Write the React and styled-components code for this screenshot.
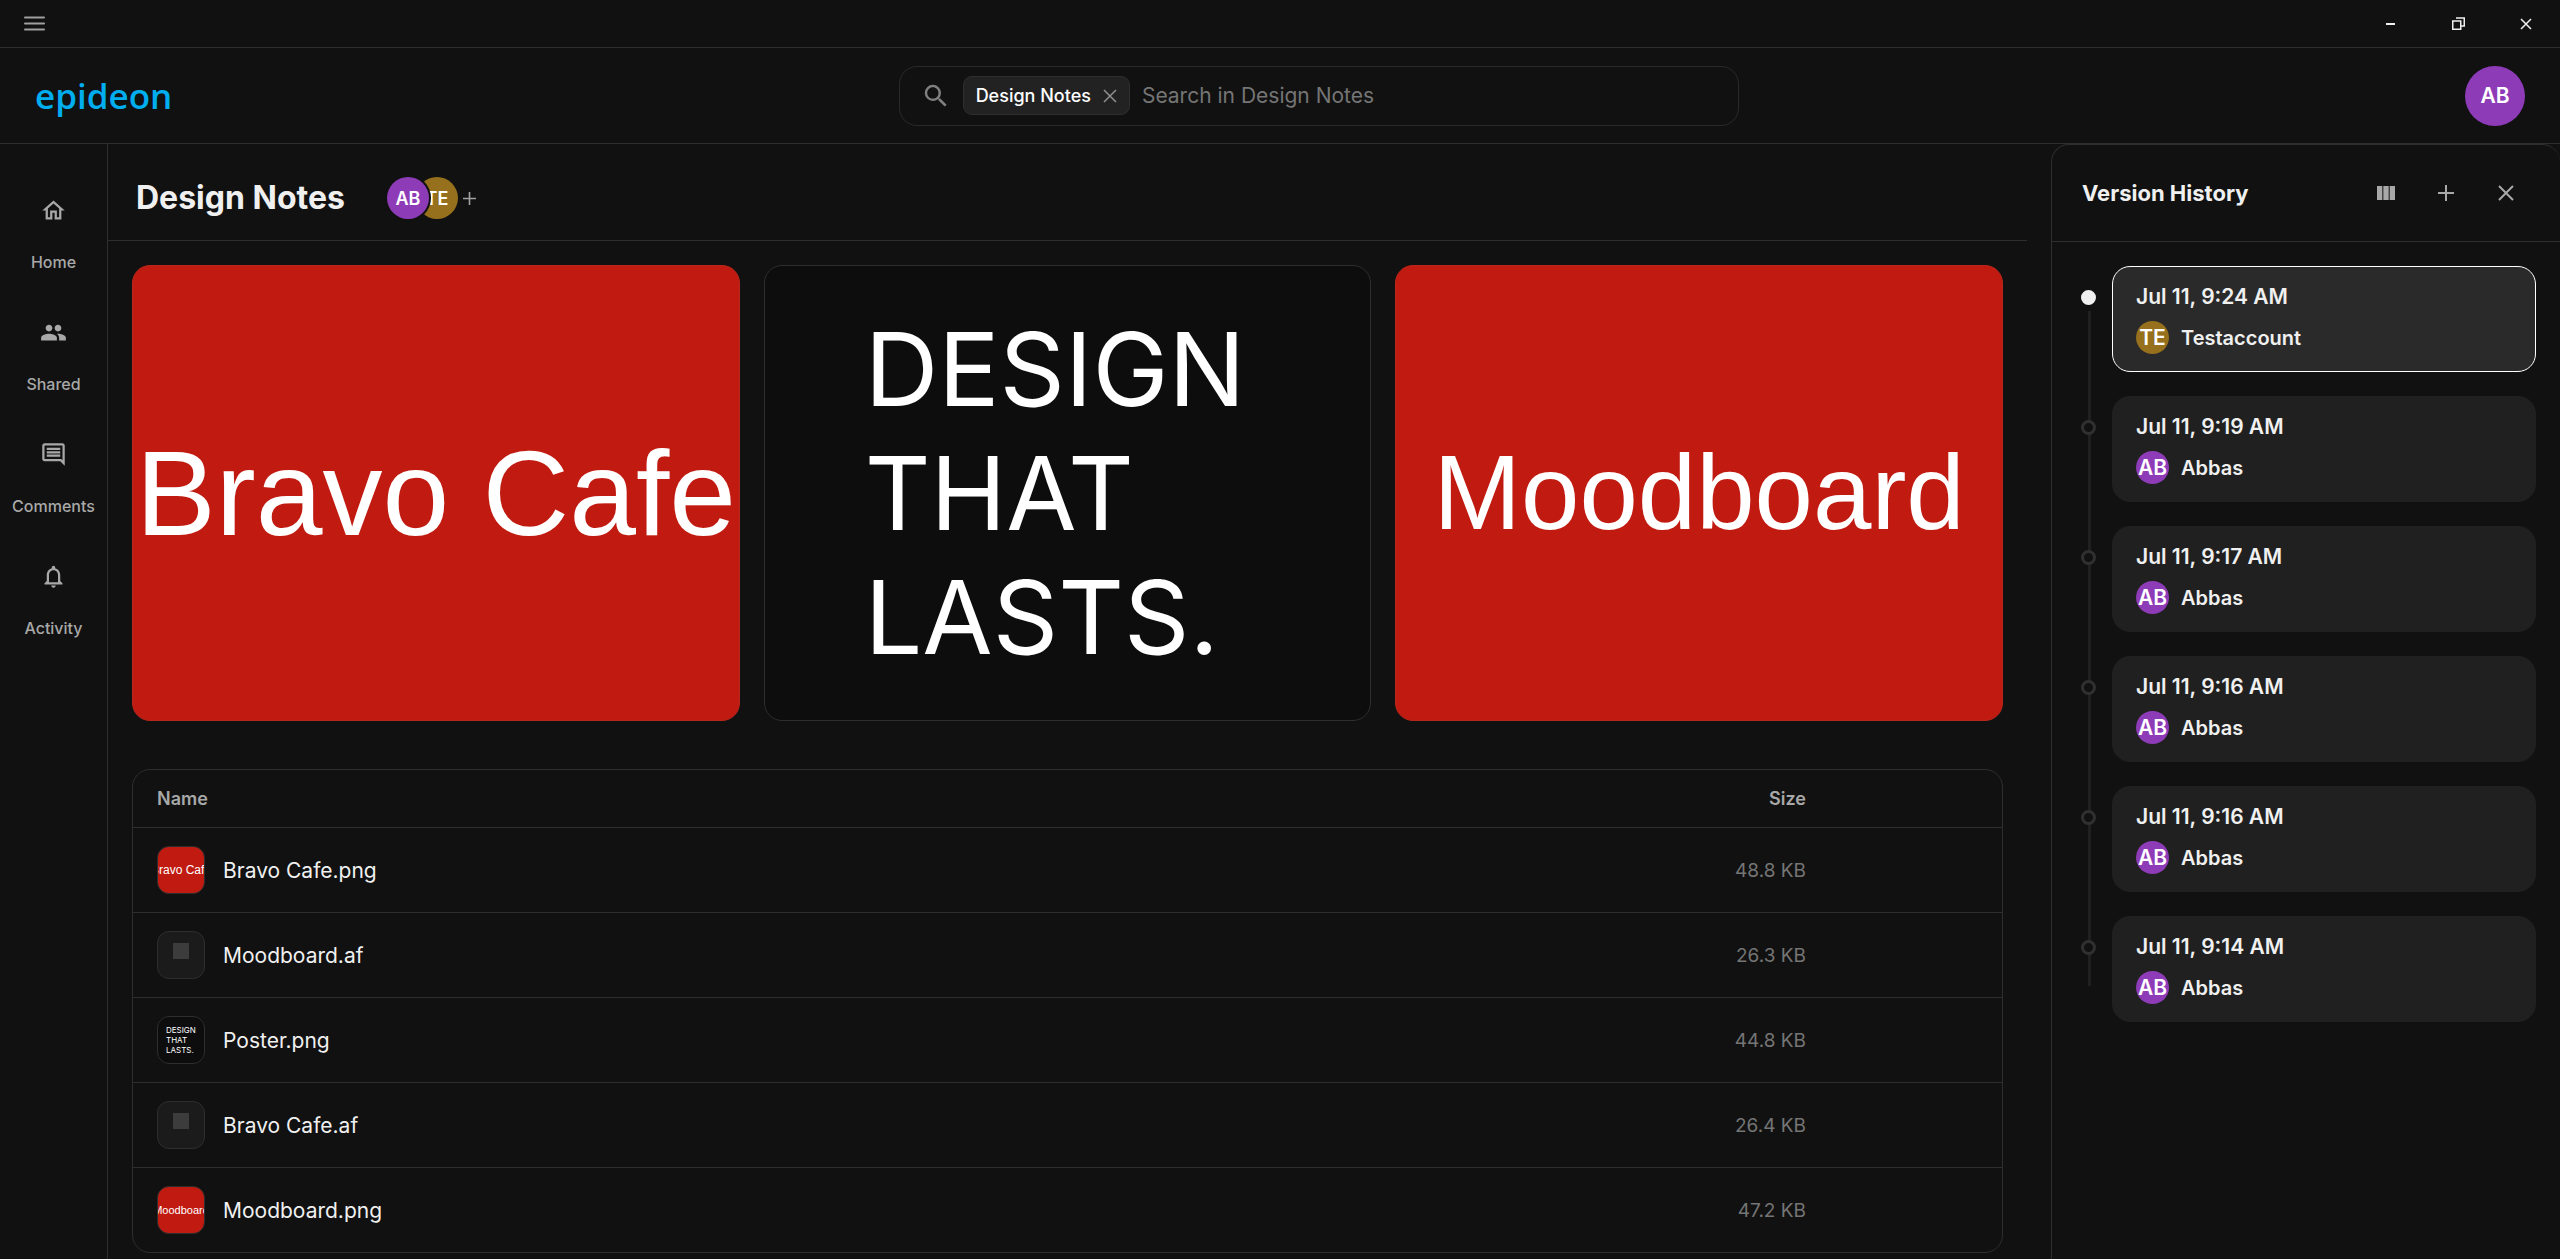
import React from 'react';
import styled, { createGlobalStyle } from 'styled-components';
import {
    MdOutlineHome,
    MdPeople,
    MdOutlineComment,
    MdNotificationsNone,
    MdSearch,
    MdViewColumn,
} from 'react-icons/md';

const GlobalStyle = createGlobalStyle`
    * {
        box-sizing: border-box;
    }
    body {
        margin: 0;
        background-color: #111111;
        color: #f0f0f0;
        font-family: 'Inter', sans-serif;
        overflow: hidden;
    }
    button {
        display: flex;
        align-items: center;
        justify-content: center;
        padding: 0;
        border: none;
        background: none;
        font-family: inherit;
        cursor: pointer;
    }
    h1, h2, p, ul, ol {
        margin: 0;
        padding: 0;
    }
    ul, ol {
        list-style: none;
    }
`

const Page = styled.div`
    display: flex;
    flex-direction: column;
    height: 100vh;
`

/* ---- title bar ---- */

const TitleBar = styled.div`
    display: flex;
    flex: none;
    justify-content: space-between;
    height: 48px;
    border-bottom: 1px solid #2e2e2e;
`

const MenuButton = styled.button`
    width: 69px;
    color: #a0a0a0;
`

const WindowControls = styled.div`
    display: flex;
`

const WindowButton = styled.button`
    width: 68px;
    color: #f0f0f0;
`

/* ---- top header ---- */

const Header = styled.header`
    display: flex;
    flex: none;
    align-items: center;
    justify-content: space-between;
    height: 96px;
    padding: 0 35px;
    border-bottom: 1px solid #2e2e2e;
`

const Logo = styled.a`
    color: #00aeef;
    font-family: 'Open Sans', sans-serif;
    font-size: 35px;
    font-weight: 600;
    line-height: 48px;
    text-decoration: none;
`

const SearchBox = styled.label`
    display: flex;
    align-items: center;
    width: 840px;
    height: 60px;
    padding: 0 21px;
    border: 1px solid #2a2a2a;
    border-radius: 18px;
    color: #808080;
`

const SearchChip = styled.span`
    display: flex;
    align-items: center;
    gap: 12px;
    height: 39px;
    margin: 0 12px;
    padding: 0 12px;
    border: 1px solid #2e2e2e;
    border-radius: 9px;
    background-color: #222222;
    color: #ffffff;
    font-size: 18px;
    font-weight: 500;
    white-space: nowrap;
`

const ChipClose = styled.button`
    color: #909090;
`

const SearchInput = styled.input`
    flex: 1;
    min-width: 0;
    padding: 0;
    border: none;
    outline: none;
    background: none;
    color: #f0f0f0;
    font-family: inherit;
    font-size: 21px;

    &::placeholder {
        color: #757575;
        opacity: 1;
    }
`

const Avatar = styled.span`
    display: flex;
    flex: none;
    align-items: center;
    justify-content: center;
    width: ${props => props.$size}px;
    height: ${props => props.$size}px;
    border-radius: 50%;
    background-color: ${props => props.$color};
    color: #ffffff;
    font-size: ${props => props.$font || 21}px;
    font-weight: 600;
`

/* ---- sidebar ---- */

const Body = styled.div`
    display: flex;
    flex: 1;
    min-height: 0;
`

const Sidebar = styled.nav`
    display: flex;
    flex: none;
    flex-direction: column;
    width: 108px;
    padding-top: 42px;
    border-right: 1px solid #2e2e2e;
`

const NavLink = styled.a`
    display: flex;
    flex-direction: column;
    align-items: center;
    gap: 26px;
    height: 122px;
    padding-top: 11px;
    color: #a8a8a8;
    font-size: 16px;
    font-weight: 500;
    line-height: 24px;
    text-decoration: none;
`

/* ---- main column ---- */

const Main = styled.main`
    flex: 1;
    min-width: 0;
    margin-right: 24px;
`

const MainHeader = styled.div`
    display: flex;
    align-items: center;
    height: 97px;
    padding: 12px 24px 0 28px;
    border-bottom: 1px solid #2e2e2e;
`

const Title = styled.h1`
    font-size: 32px;
    font-weight: 700;
    line-height: 42px;
`

const Members = styled.div`
    display: flex;
    align-items: center;
    margin-left: 42px;

    ${Avatar} + ${Avatar} {
        margin-left: -13px;
    }
    ${Avatar}:first-child {
        z-index: 1;
        box-shadow: 0 0 0 2px #111111;
    }
`

const AddMember = styled.button`
    margin-left: 5px;
    color: #a0a0a0;
`

const Content = styled.div`
    display: flex;
    flex-direction: column;
    gap: 48px;
    padding: 24px;
`

const Gallery = styled.div`
    display: grid;
    grid-template-columns: repeat(3, 1fr);
    gap: 24px;
`

const Preview = styled.button`
    aspect-ratio: 4 / 3;
    overflow: hidden;
    border: 1px solid ${props => (props.$dark ? '#2e2e2e' : '#b8261c')};
    border-radius: 18px;
    background-color: ${props => (props.$dark ? '#0d0d0d' : '#c11b11')};
    color: #ffffff;
`

const PreviewTitle = styled.span`
    font-family: 'Liberation Sans', sans-serif;
    font-size: ${props => props.$size}px;
    white-space: nowrap;
`

const PosterText = styled.span`
    flex: 1;
    padding-left: 100px;
    font-size: 102px;
    line-height: 124px;
    text-align: left;
`

const TableFrame = styled.div`
    overflow: hidden;
    border: 1px solid #2e2e2e;
    border-radius: 18px;
`

const FileTable = styled.table`
    width: 100%;
    border-collapse: collapse;
    table-layout: fixed;
`

const HeadCell = styled.th`
    width: ${props => props.$width || 'auto'};
    height: 58px;
    padding: 0 24px;
    border-bottom: 1px solid #2e2e2e;
    color: #a8a8a8;
    font-size: 18px;
    font-weight: 600;
    text-align: ${props => props.$align || 'left'};
`

const Row = styled.tr`
    &:not(:last-child) td {
        border-bottom: 1px solid #2e2e2e;
    }
`

const Cell = styled.td`
    height: 85px;
    padding: 0 24px;
    color: #757575;
    font-size: 19px;
    text-align: ${props => props.$align || 'left'};

    ${Row}:last-child & {
        height: 84px;
    }
`

const FileName = styled.div`
    display: flex;
    align-items: center;
    gap: 18px;
    color: #f0f0f0;
    font-size: 21px;
`

const Thumb = styled.span`
    display: flex;
    flex: none;
    align-items: center;
    justify-content: center;
    width: 48px;
    height: 48px;
    overflow: hidden;
    border: 1px solid #2e2e2e;
    border-radius: 12px;
    background-color: ${props => props.$bg};
    color: #ffffff;
    font-family: 'Liberation Sans', sans-serif;
    font-size: ${props => props.$font || 12}px;
    white-space: nowrap;
`

const ThumbPoster = styled.span`
    flex: 1;
    padding-left: 8px;
    font-family: 'Inter', sans-serif;
    font-size: 8px;
    line-height: 10px;
`

const ThumbBlank = styled.span`
    width: 16px;
    height: 16px;
    margin-bottom: 8px;
    background-color: #3c3c3c;
`

/* ---- version history ---- */

const Panel = styled.aside`
    flex: none;
    width: 509px;
    border: 1px solid #2e2e2e;
    border-right: none;
    border-bottom: none;
    border-radius: 18px 18px 0 0;
`

const PanelHeader = styled.div`
    display: flex;
    align-items: center;
    justify-content: space-between;
    height: 97px;
    padding: 0 24px 0 30px;
    border-bottom: 1px solid #2e2e2e;
`

const PanelTitle = styled.h2`
    font-size: 22px;
    font-weight: 700;
`

const PanelActions = styled.div`
    display: flex;
`

const PanelButton = styled.button`
    width: 60px;
    height: 60px;
    color: #a8a8a8;
`

const Timeline = styled.ol`
    position: relative;
    display: flex;
    flex-direction: column;
    gap: 24px;
    margin: 24px 24px 0 29px;

    &::before {
        content: '';
        position: absolute;
        top: 45px;
        bottom: 36px;
        left: 7px;
        width: 3px;
        background-color: #202020;
    }
`

const Version = styled.li`
    display: flex;
    gap: 16px;
`

const Dot = styled.span`
    z-index: 1;
    flex: none;
    width: 15px;
    height: 15px;
    margin-top: 24px;
    border: 3px solid ${props => (props.$current ? '#f0f0f0' : '#303030')};
    border-radius: 50%;
    background-color: ${props => (props.$current ? '#f0f0f0' : '#111111')};
`

const VersionCard = styled.button`
    flex: 1;
    flex-direction: column;
    align-items: flex-start;
    gap: 11px;
    padding: 17px 23px;
    border: 1px solid ${props => (props.$current ? '#ffffff' : '#202020')};
    border-radius: 18px;
    background-color: ${props => (props.$current ? '#2a2a2a' : '#202020')};
    color: #f0f0f0;
`

const VersionDate = styled.span`
    font-size: 21px;
    font-weight: 600;
    line-height: 26px;
`

const Author = styled.span`
    display: flex;
    align-items: center;
    gap: 12px;
    font-size: 20px;
    font-weight: 600;
`

const PURPLE = '#8e3bb8';
const GOLD = '#96701c';

const navItems = [
    { label: 'Home', Icon: MdOutlineHome },
    { label: 'Shared', Icon: MdPeople },
    { label: 'Comments', Icon: MdOutlineComment },
    { label: 'Activity', Icon: MdNotificationsNone },
];

const files = [
    { name: 'Bravo Cafe.png', size: '48.8 KB', kind: 'cafe' },
    { name: 'Moodboard.af', size: '26.3 KB' },
    { name: 'Poster.png', size: '44.8 KB', kind: 'poster' },
    { name: 'Bravo Cafe.af', size: '26.4 KB' },
    { name: 'Moodboard.png', size: '47.2 KB', kind: 'mood' },
];

const versions = [
    { date: 'Jul 11, 9:24 AM', author: 'Testaccount', initials: 'TE', color: GOLD },
    { date: 'Jul 11, 9:19 AM', author: 'Abbas', initials: 'AB', color: PURPLE },
    { date: 'Jul 11, 9:17 AM', author: 'Abbas', initials: 'AB', color: PURPLE },
    { date: 'Jul 11, 9:16 AM', author: 'Abbas', initials: 'AB', color: PURPLE },
    { date: 'Jul 11, 9:16 AM', author: 'Abbas', initials: 'AB', color: PURPLE },
    { date: 'Jul 11, 9:14 AM', author: 'Abbas', initials: 'AB', color: PURPLE },
];

const CrossIcon = ({ size, stroke = 2 }) => (
    <svg width={size} height={size} viewBox={`0 0 ${size} ${size}`} fill="none" stroke="currentColor" strokeWidth={stroke}>
        <path d={`M1 1L${size - 1} ${size - 1}M${size - 1} 1L1 ${size - 1}`} />
    </svg>
)

const PlusIcon = ({ size, stroke = 2 }) => (
    <svg width={size} height={size} viewBox="0 0 16 16" fill="none" stroke="currentColor" strokeWidth={stroke}>
        <path d="M8 0V16M0 8H16" />
    </svg>
)

const FileThumb = ({ kind }) => {
    if (kind === 'cafe') return <Thumb $bg="#c11b11">Bravo Cafe</Thumb>;
    if (kind === 'mood') return <Thumb $bg="#c11b11" $font={11}>Moodboard</Thumb>;
    if (kind === 'poster') {
        return (
            <Thumb $bg="#0d0d0d">
                <ThumbPoster>DESIGN<br />THAT<br />LASTS.</ThumbPoster>
            </Thumb>
        );
    }
    return <Thumb $bg="#1b1b1b"><ThumbBlank /></Thumb>;
}

const App = () => {
    return (
        <Page>
            <GlobalStyle />
            <TitleBar>
                <MenuButton aria-label="Menu">
                    <svg width="21" height="15" viewBox="0 0 21 15" fill="none" stroke="currentColor" strokeWidth="2" strokeLinecap="round">
                        <path d="M1 1.5H20M1 7.5H20M1 13.5H20" />
                    </svg>
                </MenuButton>
                <WindowControls>
                    <WindowButton aria-label="Minimize">
                        <svg width="9" height="2"><rect width="9" height="2" fill="currentColor" /></svg>
                    </WindowButton>
                    <WindowButton aria-label="Restore">
                        <svg width="13" height="13" viewBox="0 0 13 13" fill="none" stroke="currentColor" strokeWidth="1.5">
                            <path d="M0.75 4H8.75V12.25H0.75ZM4 1H12.25V9H9" />
                        </svg>
                    </WindowButton>
                    <WindowButton aria-label="Close window">
                        <CrossIcon size={12} stroke={1.5} />
                    </WindowButton>
                </WindowControls>
            </TitleBar>
            <Header>
                <Logo href="#">epideon</Logo>
                <SearchBox>
                    <MdSearch size={30} />
                    <SearchChip>
                        Design Notes
                        <ChipClose aria-label="Clear folder"><CrossIcon size={14} stroke={1.5} /></ChipClose>
                    </SearchChip>
                    <SearchInput type="text" aria-label="Search" placeholder="Search in Design Notes" />
                </SearchBox>
                <Avatar as="button" $size={60} $color={PURPLE}>AB</Avatar>
            </Header>
            <Body>
                <Sidebar>
                    {navItems.map(({ label, Icon }) => (
                        <NavLink href="#" key={label}>
                            <Icon size={27} />
                            {label}
                        </NavLink>
                    ))}
                </Sidebar>
                <Main>
                    <MainHeader>
                        <Title>Design Notes</Title>
                        <Members>
                            <Avatar $size={42} $color={PURPLE} $font={18}>AB</Avatar>
                            <Avatar $size={42} $color={GOLD} $font={18}>TE</Avatar>
                            <AddMember aria-label="Add member"><PlusIcon size={13} stroke={2} /></AddMember>
                        </Members>
                    </MainHeader>
                    <Content>
                        <Gallery>
                            <Preview><PreviewTitle $size={120}>Bravo Cafe</PreviewTitle></Preview>
                            <Preview $dark>
                                <PosterText>DESIGN<br />THAT<br />LASTS.</PosterText>
                            </Preview>
                            <Preview><PreviewTitle $size={105}>Moodboard</PreviewTitle></Preview>
                        </Gallery>
                        <TableFrame>
                            <FileTable>
                                <thead>
                                    <tr>
                                        <HeadCell>Name</HeadCell>
                                        <HeadCell $width="240px" $align="right">Size</HeadCell>
                                        <HeadCell $width="172px" aria-label="Actions" />
                                    </tr>
                                </thead>
                                <tbody>
                                    {files.map(file => (
                                        <Row key={file.name}>
                                            <Cell>
                                                <FileName>
                                                    <FileThumb kind={file.kind} />
                                                    {file.name}
                                                </FileName>
                                            </Cell>
                                            <Cell $align="right">{file.size}</Cell>
                                            <Cell />
                                        </Row>
                                    ))}
                                </tbody>
                            </FileTable>
                        </TableFrame>
                    </Content>
                </Main>
                <Panel>
                    <PanelHeader>
                        <PanelTitle>Version History</PanelTitle>
                        <PanelActions>
                            <PanelButton aria-label="Compare"><MdViewColumn size={24} /></PanelButton>
                            <PanelButton aria-label="New version"><PlusIcon size={16} /></PanelButton>
                            <PanelButton aria-label="Close panel"><CrossIcon size={16} /></PanelButton>
                        </PanelActions>
                    </PanelHeader>
                    <Timeline>
                        {versions.map((version, index) => (
                            <Version key={index}>
                                <Dot $current={index === 0} />
                                <VersionCard $current={index === 0}>
                                    <VersionDate>{version.date}</VersionDate>
                                    <Author>
                                        <Avatar $size={33} $color={version.color}>{version.initials}</Avatar>
                                        {version.author}
                                    </Author>
                                </VersionCard>
                            </Version>
                        ))}
                    </Timeline>
                </Panel>
            </Body>
        </Page>
    );
}

export default App;
